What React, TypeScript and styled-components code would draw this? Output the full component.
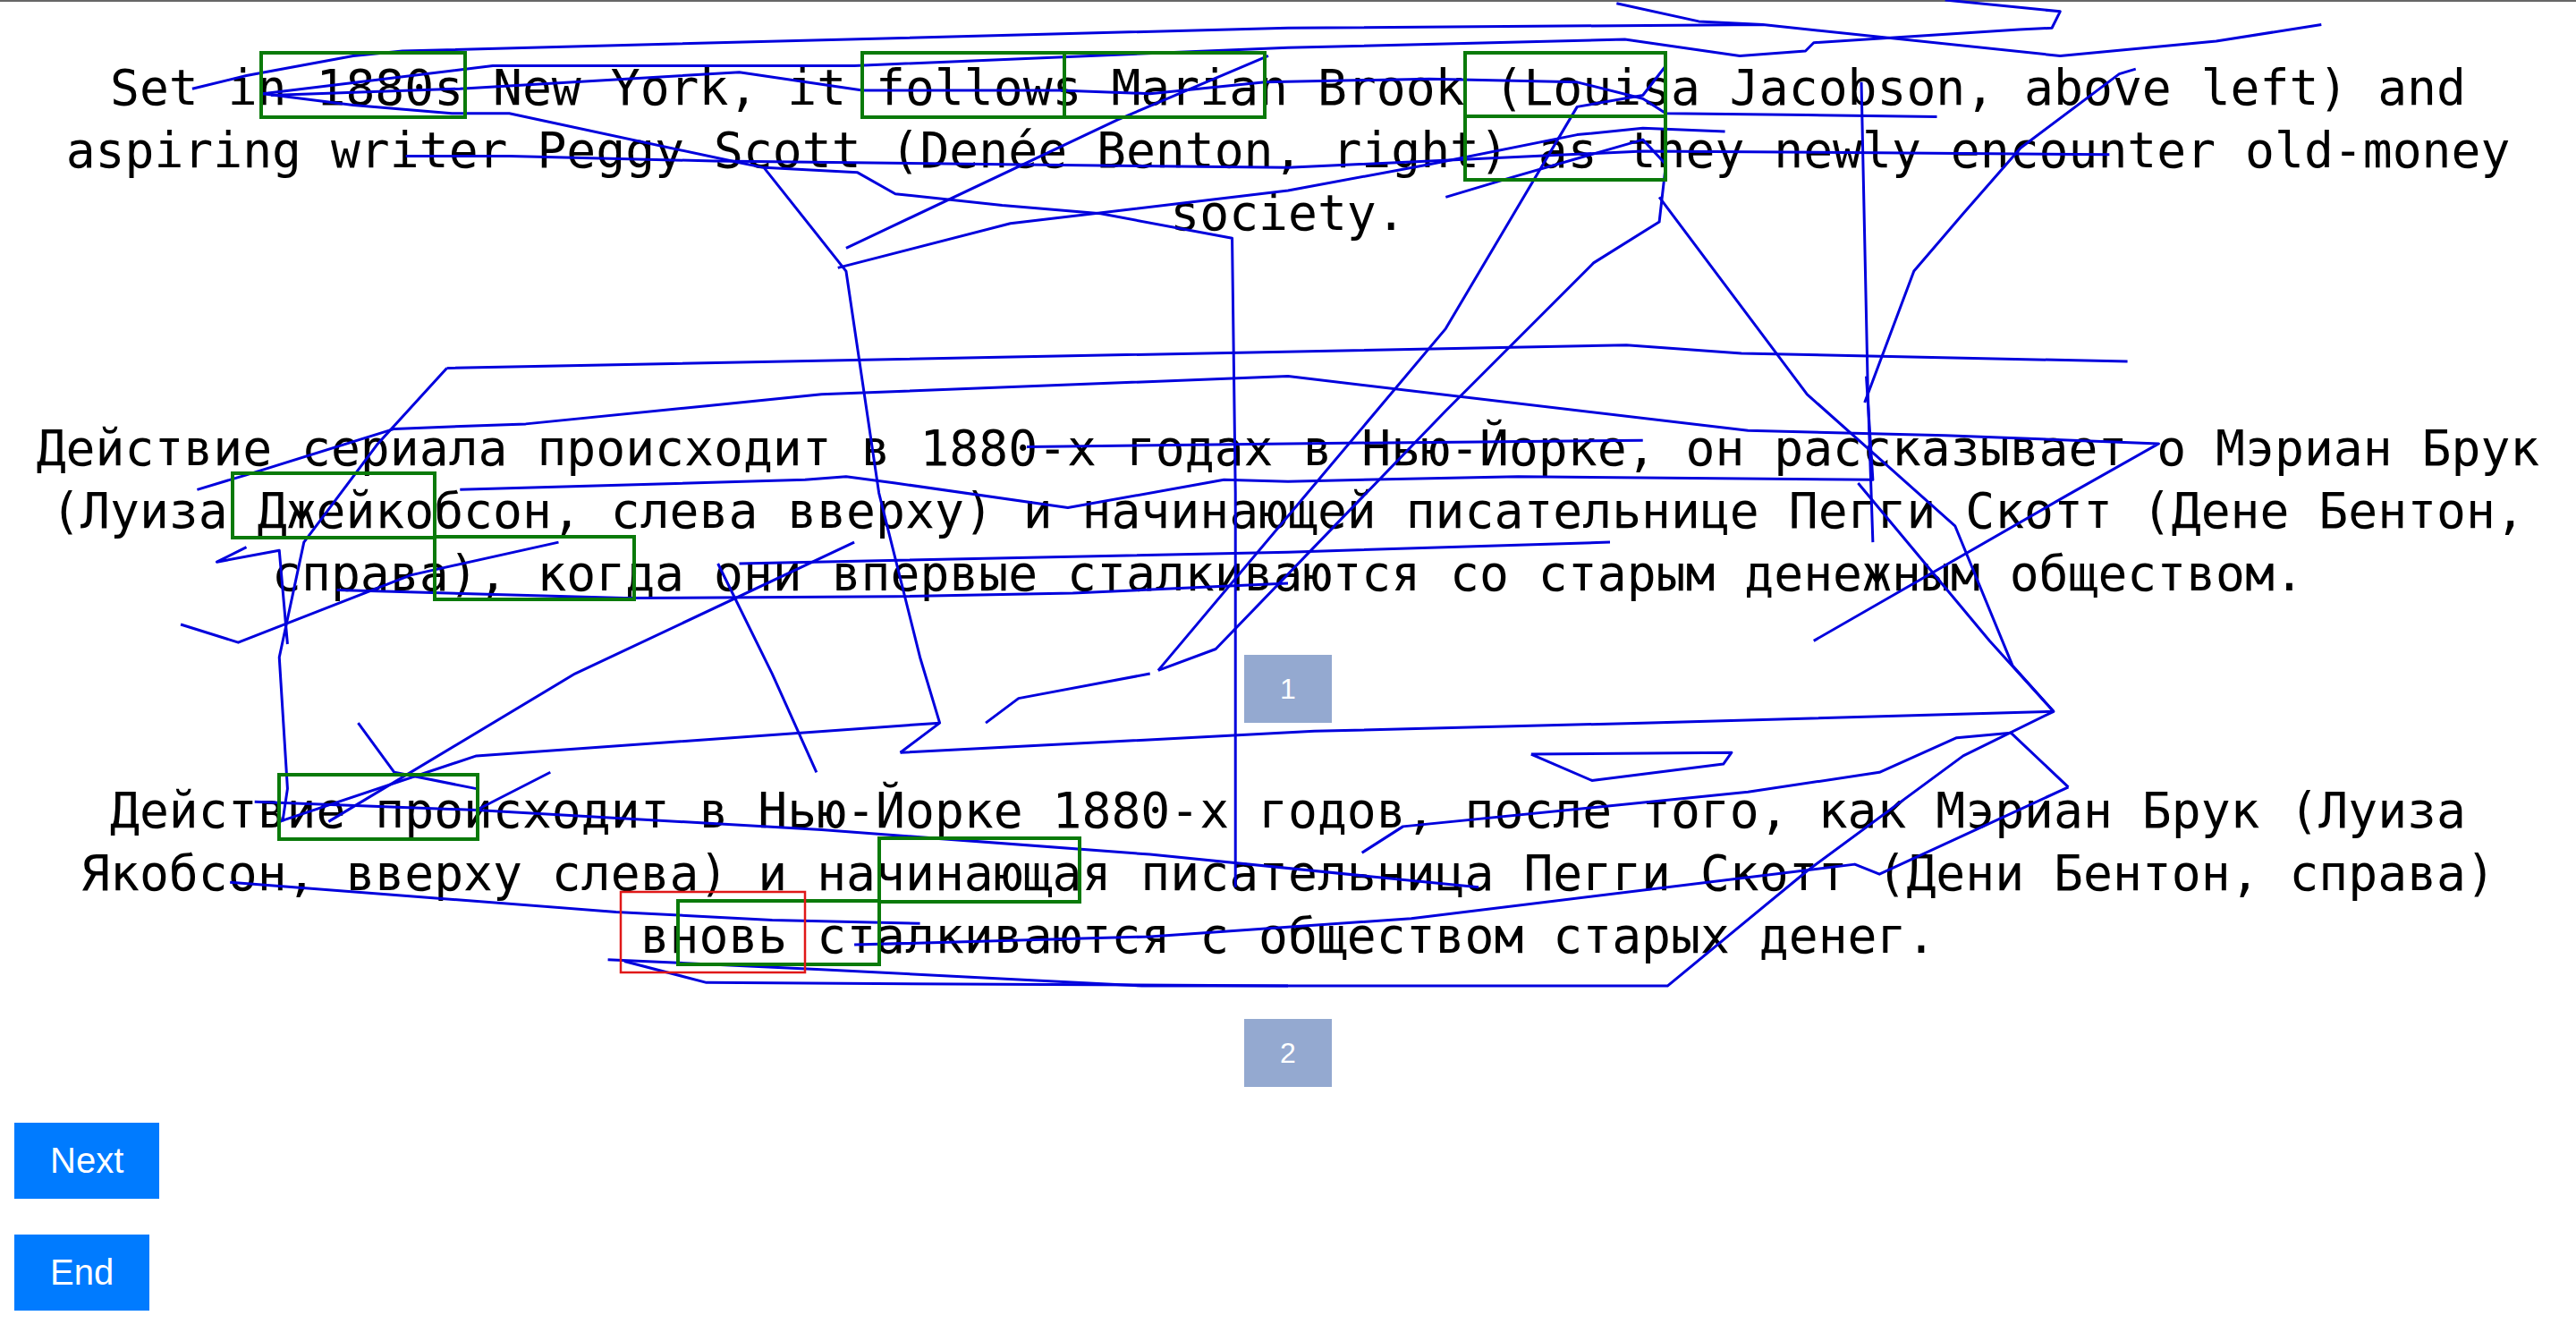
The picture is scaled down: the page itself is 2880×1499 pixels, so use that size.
import React from 'react'
import styled, { createGlobalStyle } from 'styled-components'

const GlobalStyle = createGlobalStyle`
  html, body {
    margin: 0;
    padding: 0;
    background: #ffffff;
  }
`

// gaze trace, drawn in the 1568x816 preview space and scaled up
const trace: number[][] = [
  [117, 54, 150, 46, 215, 34, 245, 31, 784, 17, 1073, 15, 1254, 34, 1349, 25, 1413, 15],
  [984, 2, 1034, 13, 1073, 15],
  [1184, 0, 1254, 7, 1249, 17, 1229, 18, 1104, 26, 1099, 31, 1059, 34, 989, 24, 784, 29, 520, 40, 300, 40, 160, 57],
  [160, 57, 215, 64, 275, 69, 310, 69, 450, 99, 465, 102, 515, 165, 535, 300, 560, 400, 572, 440, 548, 458],
  [165, 58, 280, 54, 450, 44, 525, 55, 645, 55, 700, 57, 770, 50, 870, 48, 960, 50, 1000, 60, 1014, 69, 1100, 70, 1179, 71],
  [247, 95, 310, 95, 435, 98, 784, 102, 1000, 92, 1284, 94],
  [465, 102, 522, 105, 545, 118, 610, 125, 670, 130, 750, 145, 752, 300, 752, 540],
  [510, 163, 615, 136, 784, 116, 870, 100, 960, 82, 1000, 78, 1050, 80],
  [515, 151, 680, 73, 772, 34],
  [705, 408, 880, 200, 960, 65, 1000, 58, 1014, 40],
  [705, 408, 740, 395, 880, 250, 970, 160, 1010, 135, 1014, 100, 1000, 85, 920, 108, 880, 120],
  [1133, 50, 1137, 240, 1140, 330],
  [272, 224, 990, 210, 1060, 215, 1295, 220],
  [272, 224, 230, 270, 185, 330, 170, 400, 175, 480, 172, 500],
  [1010, 120, 1100, 240, 1190, 320, 1225, 405, 1250, 433, 1195, 460, 1100, 530, 1015, 600, 784, 600, 430, 598, 380, 585],
  [1135, 245, 1165, 165, 1195, 130, 1230, 90, 1290, 45, 1300, 42],
  [548, 458, 800, 445, 1000, 440, 1250, 433],
  [170, 500, 290, 460, 572, 440],
  [932, 459, 1054, 458, 1049, 465, 969, 475, 932, 459],
  [120, 298, 150, 289, 240, 261, 320, 258, 430, 247, 500, 240, 784, 229, 1064, 262, 1184, 265, 1314, 270, 1259, 301, 1104, 390],
  [625, 272, 784, 270, 1000, 268],
  [1136, 229, 1140, 292, 924, 290, 784, 293, 745, 292, 650, 309, 545, 294, 515, 290, 490, 292, 280, 298],
  [1131, 294, 1211, 390, 1250, 433],
  [110, 380, 145, 391, 250, 350, 340, 330],
  [150, 333, 132, 342, 170, 335, 175, 392],
  [205, 359, 380, 364, 545, 363, 653, 361, 784, 355],
  [450, 343, 784, 336, 980, 330],
  [437, 343, 470, 410, 497, 470],
  [218, 440, 240, 470, 290, 480],
  [200, 500, 350, 410, 520, 330],
  [1259, 479, 1224, 446, 1191, 449, 1144, 470, 1064, 482, 854, 503, 829, 519],
  [1259, 479, 1144, 532, 1129, 526, 859, 559, 700, 570, 520, 575],
  [335, 470, 290, 493, 155, 488],
  [290, 493, 500, 505, 700, 520, 900, 540],
  [140, 537, 375, 555, 470, 560, 560, 562],
  [370, 584, 500, 590, 695, 600, 784, 600],
  [600, 440, 620, 425, 700, 410]
]

const wordBoxes = [
  [292, 59, 228, 72],
  [964, 59, 226, 72],
  [1190, 59, 224, 72],
  [1638, 59, 224, 71],
  [1638, 130, 224, 71],
  [260, 529, 226, 72],
  [486, 600, 223, 70],
  [312, 866, 222, 72],
  [983, 937, 224, 71],
  [758, 1007, 225, 71]
]

const Page = styled.div`
  position: relative;
  width: 2880px;
  min-height: 1499px;
  font-family: 'DejaVu Sans Mono', monospace;
`

const TopRule = styled.div`
  height: 2px;
  background: #676767;
`

const Content = styled.div`
  display: flex;
  flex-direction: column;
  padding: 0 8px;
`

const Passage = styled.p<{ $gap: number }>`
  margin: ${p => p.$gap}px 0 0;
  font-size: 54.7px;
  line-height: 70px;
  color: #000;
  text-align: center;
`

const PageTag = styled.div<{ $gap: number }>`
  align-self: center;
  margin-top: ${p => p.$gap}px;
  width: 98px;
  height: 76px;
  display: flex;
  align-items: center;
  justify-content: center;
  background: #94a9d0;
  color: #fff;
  font-family: 'Liberation Sans', Arial, sans-serif;
  font-size: 32px;
`

const Actions = styled.div`
  display: flex;
  flex-direction: column;
  align-items: flex-start;
  gap: 40px;
  margin-top: 40px;
  padding-left: 16px;
`

const ActionButton = styled.button`
  height: 85px;
  padding: 0 40px;
  border: none;
  border-radius: 0;
  background: #007bff;
  color: #fff;
  font-family: 'Liberation Sans', Arial, sans-serif;
  font-size: 40px;
  cursor: pointer;
`

const Overlay = styled.svg`
  position: absolute;
  left: 0;
  top: 0;
  pointer-events: none;
`

export default function App() {
  return (
    <Page>
      <GlobalStyle />
      <TopRule />
      <Content>
        <Passage $gap={61}>
          Set in 1880s New York, it follows Marian Brook (Louisa Jacobson, above left) and aspiring writer Peggy
          Scott (Denée Benton, right) as they newly encounter old-money society.
        </Passage>
        <Passage $gap={193}>
          Действие сериала происходит в 1880-х годах в Нью-Йорке, он рассказывает о Мэриан Брук (Луиза Джейкобсон,
          слева вверху) и начинающей писательнице Пегги Скотт (Дене Бентон, справа), когда они впервые сталкиваются
          со старым денежным обществом.
        </Passage>
        <PageTag $gap={56}>1</PageTag>
        <Passage $gap={63}>
          Действие происходит в Нью-Йорке 1880-х годов, после того, как Мэриан Брук (Луиза Якобсон, вверху слева) и
          начинающая писательница Пегги Скотт (Дени Бентон, справа) вновь сталкиваются с обществом старых денег.
        </Passage>
        <PageTag $gap={58}>2</PageTag>
      </Content>
      <Actions>
        <ActionButton>Next</ActionButton>
        <ActionButton>End</ActionButton>
      </Actions>
      <Overlay width="2880" height="1499" viewBox="0 0 2880 1499">
        <g transform="scale(1.836735)" fill="none" stroke="#0000dd" strokeLinejoin="round">
          {trace.map((pts, i) => (
            <polyline key={i} points={pts.join(' ')} strokeWidth={3} vectorEffect="non-scaling-stroke" />
          ))}
        </g>
        {wordBoxes.map(([x, y, w, h], i) => (
          <rect key={i} x={x} y={y} width={w} height={h} fill="none" stroke="#0a7a0a" strokeWidth={4} />
        ))}
        <rect x={694} y={997} width={206} height={90} fill="none" stroke="#e01818" strokeWidth={2.5} />
      </Overlay>
    </Page>
  )
}
